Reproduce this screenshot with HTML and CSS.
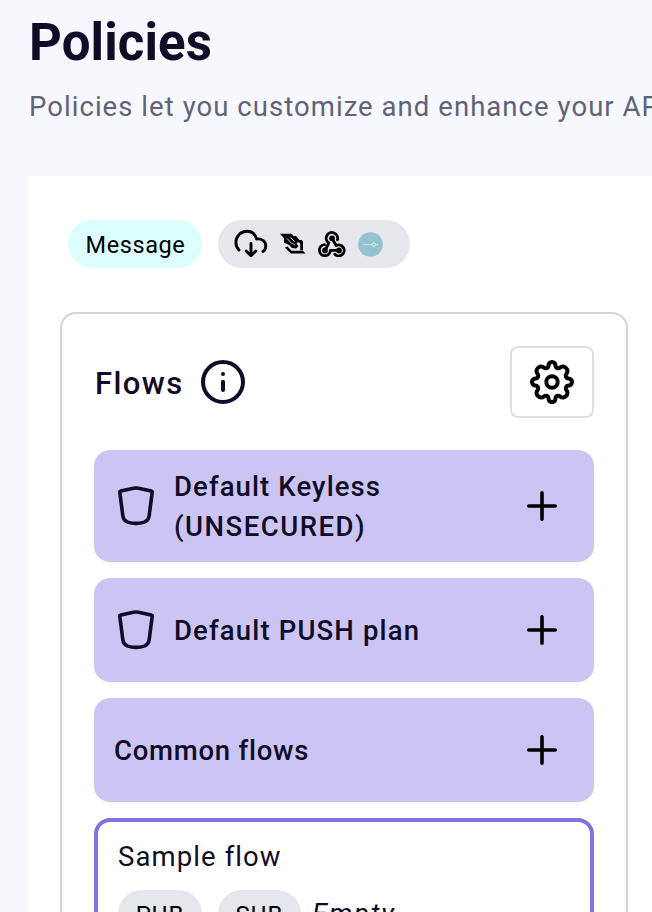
FILE: index.html
```html
<!DOCTYPE html>
<html lang="en">
<head>
<meta charset="utf-8">
<title>Policies</title>
<link rel="stylesheet" href="styles.css">
</head>
<body>
<header class="page-header">
  <h1 class="title">Policies</h1>
  <p class="subtitle">Policies let you customize and enhance your APIs</p>
</header>
<main class="studio">
  <div class="badges">
    <span class="badge badge-message">Message</span>
    <span class="badge badge-icons">
      <svg class="icon-cloud" viewBox="0 0 34 30" fill="none" stroke="#000" stroke-width="2.9" stroke-linecap="round" stroke-linejoin="round"><path d="M5 21C3 19 1.900 16.700 1.900 13.500C1.900 7 6.800 2.200 13 2.200C18 2.200 21.300 5 22.500 10C28 9.400 31.800 12.400 31.800 17C31.800 19.500 30.900 21.300 28.900 22.500"/><path d="M17 14.500V26.500M12.200 22L17 26.700L21.800 22"/></svg>
      <svg class="icon-socket" viewBox="0 0 26 22"><path d="M0 .8H11.500L13.500 3H16L19.500 7L21.800 7L23 8.500V17.200H20.200V10.500L18 9L16.500 10.500L18.500 13.500L16 15.500L12 15L9 12L4 9.500V5.500L2.800 4Z"/><path d="M7.500 13.500L11.500 17.700H23L25.500 20.600H10.800L4.800 14.500Z"/><path d="M7 5.500L12.500 11M10.500 4.500L14.500 8.500M14.800 12.300L12.800 10.300" stroke="#e6e7ec" stroke-width="1" fill="none"/></svg>
      <svg class="icon-webhook" viewBox="0 0 28 26" fill="none" stroke="#000" stroke-width="2.800" stroke-linecap="round" stroke-linejoin="round"><path d="M19.400 8.800A5.700 5.700 0 1 0 10.800 12L7.500 18.500"/><path d="M14 7.500L18.200 14.500A5.500 5.500 0 1 1 16.800 23.300"/><path d="M6.500 13.700A5.500 5.500 0 1 0 12.400 19.400H20.500"/><circle cx="14" cy="7.300" r="1.500" fill="#000"/><circle cx="7" cy="19.400" r="1.500" fill="#000"/><circle cx="21" cy="19.400" r="1.500" fill="#000"/></svg>
      <svg class="icon-mock" viewBox="0 0 25 25"><circle cx="12.500" cy="12.500" r="12.300" fill="#94c2cf"/><path d="M5 12.500H14M17.500 12.500H20" stroke="#c6e0e7"/><circle cx="15.800" cy="12.500" r="1.700" fill="none" stroke="#e0f0f4"/></svg>
    </span>
  </div>
  <section class="flows">
    <div class="flows-head">
      <h2 class="flows-title">Flows</h2>
      <svg class="icon-info" viewBox="0 0 44 44" fill="none" stroke="#100c27" stroke-width="4" stroke-linecap="round"><circle cx="22" cy="22" r="20"/><path d="M22 21.800V30M22 14V14.100"/></svg>
      <button class="settings" aria-label="Settings"><svg viewBox="0 0 44 44" fill="none" stroke="#000" stroke-width="4" stroke-linejoin="round"><path d="M22 2C24 2 25.500 3.500 25.500 5.500C25.500 8 28.300 9.100 30.100 7.500C32 5.800 34.600 6.200 36 7.900C37.800 9.500 38 12.100 36.400 13.900C34.900 15.700 36.100 18.500 38.500 18.500C40.500 18.500 42 20 42 22C42 24 40.500 25.500 38.500 25.500C36.100 25.500 34.900 28.300 36.400 30.100C38 31.900 37.800 34.500 36 36.100C34.600 37.800 32 38.200 30.100 36.500C28.300 34.900 25.500 36 25.500 38.500C25.500 40.500 24 42 22 42C20 42 18.500 40.500 18.500 38.500C18.500 36 15.700 34.900 13.900 36.500C12 38.200 9.400 37.800 8 36.100C6.200 34.500 6 31.900 7.600 30.100C9.100 28.300 7.900 25.500 5.500 25.500C3.500 25.500 2 24 2 22C2 20 3.500 18.500 5.500 18.500C7.900 18.500 9.100 15.700 7.600 13.900C6 12.100 6.200 9.500 8 7.900C9.400 6.200 12 5.800 13.900 7.500C15.700 9.100 18.500 8 18.500 5.500C18.500 3.500 20 2 22 2Z"/><circle cx="22" cy="22" r="5.700"/></svg></button>
    </div>
    <div class="plan plan-tall">
      <svg class="icon-shield" viewBox="0 0 38 40"><path d="M2.800 6.300Q2.600 5.300 3.800 5L16.500 2.200Q19 1.700 21.500 2.200L34.200 5Q35.400 5.300 35.200 6.300L32.200 29.500Q31.600 34.500 27.300 36.100Q19 38.700 10.700 36.100Q6.400 34.500 5.800 29.500Z"/></svg>
      <h3 class="plan-name"><span class="line line-keyless">Default Keyless</span> <span class="line line-unsecured">(UNSECURED)</span></h3>
      <svg class="icon-plus" viewBox="0 0 30 30"><path d="M15 1.800V28.200M1.800 15H28.200"/></svg>
    </div>
    <div class="plan">
      <svg class="icon-shield" viewBox="0 0 38 40"><path d="M2.800 6.300Q2.600 5.300 3.800 5L16.500 2.200Q19 1.700 21.500 2.200L34.200 5Q35.400 5.300 35.200 6.300L32.200 29.500Q31.600 34.500 27.300 36.100Q19 38.700 10.700 36.100Q6.400 34.500 5.800 29.500Z"/></svg>
      <h3 class="plan-name"><span class="line line-push">Default PUSH plan</span></h3>
      <svg class="icon-plus" viewBox="0 0 30 30"><path d="M15 1.800V28.200M1.800 15H28.200"/></svg>
    </div>
    <div class="plan plan-common">
      <h3 class="plan-name"><span class="line line-common">Common flows</span></h3>
      <svg class="icon-plus" viewBox="0 0 30 30"><path d="M15 1.800V28.200M1.800 15H28.200"/></svg>
    </div>
    <article class="flow">
      <div class="flow-name">Sample flow</div>
      <div class="flow-info">
        <span class="badge op">PUB</span>
        <span class="badge op">SUB</span>
        <em class="empty">Empty</em>
      </div>
    </article>
  </section>
</main>
</body>
</html>
```

FILE: styles.css
```css
* { box-sizing: border-box; }
html, body { height: 912px; overflow: hidden; }
body {
  margin: 0;
  background: #f7f8fd;
  color: #100c27;
  font-family: Roboto, "Liberation Sans", sans-serif;
}
h1, h2, h3, p { margin: 0; }
svg { display: block; flex: none; }
.page-header { height: 176px; padding: 13px 0 0 29px; white-space: nowrap; overflow: hidden; }
.title { font-size: 51px; line-height: 60px; font-weight: 700; letter-spacing: 0.100px; }
.subtitle { margin-top: 17px; font-size: 27.500px; line-height: 34px; letter-spacing: 1.050px; color: #62617a; }
.studio { margin-left: 28px; height: 736px; padding: 44px 0 0 32px; background: #fff; overflow: hidden; }
.badges { display: flex; gap: 16px; margin-left: 8px; height: 48px; }
.badge { display: flex; align-items: center; justify-content: center; height: 48px; border-radius: 24px; background: #e6e7ec; color: #000; font-size: 24px; letter-spacing: 1px; }
.badge-message { width: 134px; padding: 2px 0 0 1px; background: #dcfefe; font-size: 23.500px; letter-spacing: 0.600px; }
.badge-icons { width: 192px; justify-content: flex-start; padding-left: 16px; }
.icon-cloud { width: 34px; height: 30px; }
.icon-socket { width: 26px; height: 22px; margin-left: 12px; }
.icon-webhook { width: 28px; height: 26px; margin-left: 12px; }
.icon-mock { width: 25px; height: 25px; margin-left: 12px; }
.flows { width: 568px; height: 700px; margin-top: 44px; padding: 32px; border: 2px solid #d3d3dc; border-radius: 16px; }
.flows-head { display: flex; align-items: center; height: 72px; margin-bottom: 32px; }
.flows-title { width: 88px; font-size: 31px; font-weight: 500; letter-spacing: 1.400px; padding: 3px 0 0 1px; white-space: nowrap; }
.icon-info { width: 44px; height: 44px; margin-left: 19px; }
.settings { display: flex; align-items: center; justify-content: center; width: 84px; height: 72px; margin-left: auto; padding: 0; border: 2px solid #e0e0e0; border-radius: 8px; background: #fff; }
.settings svg { width: 44px; height: 44px; }
.plan { display: flex; align-items: center; width: 500px; height: 104px; margin-bottom: 16px; padding: 0 37px 0 23px; border-radius: 16px; background: #ccc4f3; }
.plan-tall { height: 112px; }
.plan-common { padding-left: 20px; }
.icon-shield { width: 38px; height: 40px; margin-right: 19px; fill: none; stroke: #100c27; stroke-width: 3.600; stroke-linejoin: round; }
.icon-plus { width: 30px; height: 30px; margin-left: auto; fill: none; stroke: #000; stroke-width: 3.600; stroke-linecap: round; }
.plan-name { font-size: 27.500px; line-height: 40px; font-weight: 500; padding-top: 1px; white-space: nowrap; }
.line { display: block; }
.line-keyless { letter-spacing: 1.100px; }
.line-unsecured { letter-spacing: 1.500px; }
.line-push { letter-spacing: 1.150px; }
.line-common { letter-spacing: 0.750px; }
.flow { width: 500px; height: 180px; padding: 15px 20px; border: 4px solid #8572e2; border-radius: 16px; }
.flow-name { font-size: 27.500px; line-height: 40px; letter-spacing: 1.100px; }
.flow-info { display: flex; gap: 16px; margin-top: 13px; }
.op { width: 84px; padding-top: 2px; }
.op + .op { width: 83px; }
.empty { margin-left: -5px; font-size: 27.500px; line-height: 48px; letter-spacing: 1.750px; }
```
